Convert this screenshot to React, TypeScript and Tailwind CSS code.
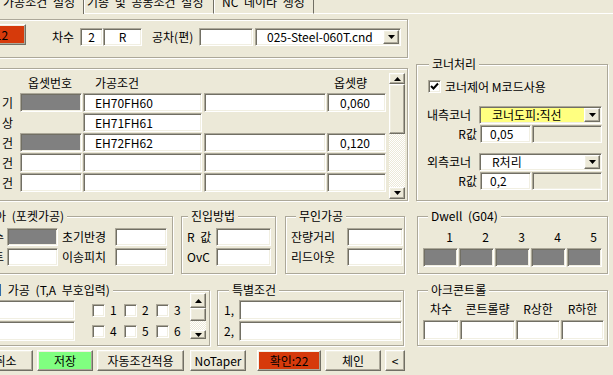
import React from "react";

const sunken =
  "border border-t-[#ACA899] border-l-[#ACA899] border-r-white border-b-white shadow-[inset_1px_1px_0_#716F64,inset_-1px_-1px_0_#F1EFE2]";
const raised =
  "border border-t-white border-l-white border-r-[#716F64] border-b-[#716F64] shadow-[inset_-1px_-1px_0_#ACA899,inset_1px_1px_0_#F1EFE2]";
const etched = "border border-[#ACA899] shadow-[inset_1px_1px_0_#fff,1px_1px_0_#fff]";

type Kids = { className?: string; children?: React.ReactNode };

function Box({ className = "", children }: Kids) {
  return (
    <div className={`${sunken} shrink-0 flex items-center whitespace-nowrap overflow-hidden ${className}`}>
      {children}
    </div>
  );
}

function Btn({ className = "", children }: Kids) {
  return (
    <div className={`${raised} h-[21px] shrink-0 flex items-center justify-center whitespace-nowrap ${className}`}>
      {children}
    </div>
  );
}

function Tri({ up }: { up?: boolean }) {
  return (
    <svg width="7" height="4" viewBox="0 0 7 4">
      {up ? <polygon points="0,4 3.5,0 7,4" fill="#000" /> : <polygon points="0,0 7,0 3.5,4" fill="#000" />}
    </svg>
  );
}

function Check({ checked }: { checked?: boolean }) {
  return (
    <div className={`${sunken} w-[13px] h-[13px] bg-white shrink-0 flex items-center justify-center`}>
      {checked && (
        <svg width="9" height="9" viewBox="0 0 9 9">
          <polyline points="1,4 3.5,6.5 8,1.5" fill="none" stroke="#000" strokeWidth="2" />
        </svg>
      )}
    </div>
  );
}

function Combo({ className = "", text, pad = "pl-[10px]" }: { className?: string; text: string; pad?: string }) {
  return (
    <div className={`${sunken} p-[1px] shrink-0 flex ${className}`}>
      <div className={`flex-1 flex items-center whitespace-nowrap overflow-hidden ${pad}`}>{text}</div>
      <div className={`${raised} w-[16px] bg-[#ECE9D8] flex items-center justify-center`}>
        <Tri />
      </div>
    </div>
  );
}

function VScroll({ className = "", up, thumb, down }: { className?: string; up: string; thumb: string; down: string }) {
  return (
    <div className={`w-[16px] shrink-0 flex flex-col ${className}`}>
      <div className={`${raised} ${up} shrink-0 bg-[#ECE9D8] flex items-center justify-center`}>
        <Tri up />
      </div>
      <div className={`${raised} ${thumb} shrink-0 bg-[#ECE9D8]`} />
      <div className="flex-1 bg-[repeating-conic-gradient(#fff_0_25%,#ECE9D8_0_50%)] bg-[length:2px_2px]" />
      <div className={`${raised} ${down} shrink-0 bg-[#ECE9D8] flex items-center justify-center`}>
        <Tri />
      </div>
    </div>
  );
}

function Group({ title, legend = "left-[10px]", className = "", children }: Kids & { title?: string; legend?: string }) {
  return (
    <div className={`relative shrink-0 ${etched} ${className}`}>
      {title && (
        <span className={`absolute -top-[7px] ${legend} px-[3px] leading-[12px] bg-[#ECE9D8] whitespace-nowrap`}>
          {title}
        </span>
      )}
      {children}
    </div>
  );
}

const offsetRows = [
  { label: "기", num: "bg-[#808080]", cond: "EH70FH60", extra: true, amt: "0,060" },
  { label: "상", num: "", cond: "EH71FH61", extra: false, amt: "" },
  { label: "건", num: "bg-[#808080]", cond: "EH72FH62", extra: true, amt: "0,120" },
  { label: "건", num: "bg-white", cond: "", extra: true, amt: "" },
  { label: "건", num: "bg-white", cond: "", extra: true, amt: "" },
];

export default function App() {
  return (
    <div className="w-[613px] h-[375px] overflow-hidden bg-[#ECE9D8] text-black text-[12px] leading-[14px] font-['Noto_Sans_CJK_KR','Noto_Sans',sans-serif] [word-spacing:3px] select-none">
      {/* tabs */}
      <div className="flex h-[14px] overflow-hidden">
        <div className="-ml-[20px] w-[104px] shrink-0 overflow-hidden border-r border-r-[#716F64] pr-[8px] text-right whitespace-nowrap">
          <div className="-mt-[5px]">가공조건 설정</div>
        </div>
        <div className="w-[130px] shrink-0 overflow-hidden border-l border-l-white border-r border-r-[#716F64] border-b border-b-white pl-[2px] whitespace-nowrap">
          <div className="-mt-[5px]">기종 및 공통조건 설정</div>
        </div>
        <div className="w-[100px] shrink-0 overflow-hidden border-l border-l-white border-r border-r-[#716F64] border-b border-b-white pl-[7px] whitespace-nowrap">
          <div className="-mt-[5px]">NC 데이타 생성</div>
        </div>
        <div className="flex-1 border-b border-b-white" />
      </div>

      {/* top bar */}
      <div className="flex mt-[5px]">
        <Group className="-ml-[60px] w-[468px] h-[39px] flex items-start pl-[36px]">
          <Btn className="mt-[4px] w-[49px] bg-[#D63A0B]">12</Btn>
          <div className="flex items-center mt-[8px] h-[18px]">
            <span className="ml-[26px] w-[28px] shrink-0">차수</span>
            <Box className="w-[23px] h-[18px] bg-white justify-center">2</Box>
            <Box className="w-[39px] h-[18px] bg-white justify-center">R</Box>
            <span className="ml-[10px] w-[47px] shrink-0 whitespace-nowrap">공차(편)</span>
            <Box className="w-[54px] h-[18px] bg-white" />
            <Combo className="ml-[2px] w-[146px] h-[18px] bg-white" text="025-Steel-060T.cnd" pad="pl-[10px]" />
          </div>
        </Group>
      </div>

      {/* offsets + corner */}
      <div className="flex items-start">
        <Group className="-ml-[60px] mt-[10px] w-[468px] h-[133px] flex items-start">
          <div className="flex flex-col">
            <div className="flex mt-[7px] h-[14px] whitespace-nowrap">
              <div className="w-[79px] shrink-0" />
              <div className="w-[63px] shrink-0 pl-[8px]">옵셋번호</div>
              <div className="w-[121px] shrink-0 pl-[12px]">가공조건</div>
              <div className="w-[123px] shrink-0" />
              <div className="w-[59px] shrink-0 pl-[7px]">옵셋량</div>
            </div>
            <div className="flex flex-col gap-[1px] mt-[3px]">
              {offsetRows.map((r, i) => (
                <div key={i} className="flex h-[19px] items-center">
                  <span className="w-[79px] shrink-0 text-right pr-[7px]">{r.label}</span>
                  {r.num ? <Box className={`w-[62px] h-[19px] ${r.num}`} /> : <div className="w-[62px] shrink-0" />}
                  <Box className="ml-[1px] w-[119px] h-[19px] bg-white pl-[11px]">{r.cond}</Box>
                  {r.extra ? (
                    <>
                      <Box className="ml-[2px] w-[122px] h-[19px] bg-white" />
                      <Box className="ml-[1px] w-[59px] h-[19px] bg-white pl-[12px]">{r.amt}</Box>
                    </>
                  ) : null}
                </div>
              ))}
            </div>
          </div>
          <VScroll className="ml-[3px] mt-[4px] h-[126px]" up="h-[11px]" thumb="h-[50px]" down="h-[12px]" />
        </Group>

        <Group title="코너처리" legend="left-[12px]" className="ml-[8px] mt-[6px] w-[192px] h-[137px] flex flex-col">
          <div className="flex items-center mt-[15px] pl-[11px] h-[13px]">
            <Check checked />
            <span className="ml-[4px] whitespace-nowrap [word-spacing:0px]">코너제어 M코드사용</span>
          </div>
          <div className="flex items-center mt-[13px] h-[18px]">
            <span className="w-[62px] shrink-0 pl-[10px]">내측코너</span>
            <Combo className="w-[123px] h-[18px] bg-[#FFFF80]" text="코너도피:직선" pad="pl-[11px]" />
          </div>
          <div className="flex items-center mt-[1px] h-[18px]">
            <span className="w-[63px] shrink-0 text-right pr-[3px]">R값</span>
            <Box className="w-[51px] h-[18px] bg-white pl-[9px]">0,05</Box>
            <Box className="ml-[1px] w-[70px] h-[18px] bg-[#ECE9D8]" />
          </div>
          <div className="flex items-center mt-[10px] h-[18px]">
            <span className="w-[62px] shrink-0 pl-[10px]">외측코너</span>
            <Combo className="w-[123px] h-[18px] bg-white" text="R처리" pad="pl-[11px]" />
          </div>
          <div className="flex items-center mt-[1px] h-[18px]">
            <span className="w-[63px] shrink-0 text-right pr-[3px]">R값</span>
            <Box className="w-[51px] h-[18px] bg-white pl-[9px]">0,2</Box>
            <Box className="ml-[1px] w-[70px] h-[18px] bg-[#ECE9D8]" />
          </div>
        </Group>
      </div>

      {/* pocket / approach / unmanned / dwell */}
      <div className="flex items-start mt-[15px]">
        <Group title="노코아 (포켓가공)" legend="left-[29px]" className="-ml-[60px] w-[233px] h-[58px]">
          <div className="flex flex-col gap-[2px] mt-[11px]">
            <div className="flex items-center h-[18px]">
              <span className="w-[66px] shrink-0 text-right pr-[3px]">수</span>
              <Box className="w-[51px] h-[18px] bg-[#808080]" />
              <span className="w-[57px] shrink-0 pl-[4px]">초기반경</span>
              <Box className="w-[52px] h-[18px] bg-white" />
            </div>
            <div className="flex items-center h-[18px]">
              <span className="w-[66px] shrink-0 text-right pr-[3px]">트</span>
              <Box className="w-[51px] h-[18px] bg-white" />
              <span className="w-[57px] shrink-0 pl-[4px]">이송피치</span>
              <Box className="w-[52px] h-[18px] bg-white" />
            </div>
          </div>
        </Group>

        <Group title="진입방법" legend="left-[6px]" className="ml-[8px] w-[95px] h-[58px]">
          <div className="flex flex-col gap-[2px] mt-[11px]">
            <div className="flex items-center h-[18px]">
              <span className="w-[34px] shrink-0 pl-[5px] whitespace-nowrap">R 값</span>
              <Box className="w-[55px] h-[18px] bg-white" />
            </div>
            <div className="flex items-center h-[18px]">
              <span className="w-[34px] shrink-0 pl-[5px]">OvC</span>
              <Box className="w-[55px] h-[18px] bg-white" />
            </div>
          </div>
        </Group>

        <Group title="무인가공" className="ml-[9px] w-[120px] h-[58px]">
          <div className="flex flex-col gap-[2px] mt-[11px]">
            <div className="flex items-center h-[18px]">
              <span className="w-[61px] shrink-0 pl-[5px]">잔량거리</span>
              <Box className="w-[56px] h-[18px] bg-white" />
            </div>
            <div className="flex items-center h-[18px]">
              <span className="w-[61px] shrink-0 pl-[5px]">리드아웃</span>
              <Box className="w-[56px] h-[18px] bg-white" />
            </div>
          </div>
        </Group>

        <Group title="Dwell (G04)" className="ml-[12px] w-[191px] h-[58px]">
          <div className="flex gap-[1px] pl-[5px] mt-[13px] h-[14px]">
            {[1, 2, 3, 4, 5].map((n) => (
              <span key={n} className="w-[35px] shrink-0 text-right pr-[5px]">{n}</span>
            ))}
          </div>
          <div className="flex gap-[1px] pl-[5px] mt-[4px]">
            {[1, 2, 3, 4, 5].map((n) => (
              <Box key={n} className="w-[35px] h-[19px] bg-[#808080]" />
            ))}
          </div>
        </Group>
      </div>

      {/* taper / special / arc */}
      <div className="flex items-start mt-[16px]">
        <Group title="테이퍼 가공 (T,A 부호입력)" legend="left-[25px]" className="-ml-[60px] w-[270px] h-[56px] flex items-start">
          <div className="flex flex-col gap-[1px] mt-[9px] ml-[39px]">
            <Box className="w-[95px] h-[20px] bg-white" />
            <Box className="w-[95px] h-[20px] bg-white" />
          </div>
          <div className="flex flex-col gap-[1px] mt-[9px] ml-[17px]">
            {[[1, 2, 3], [4, 5, 6]].map((row, i) => (
              <div key={i} className="flex h-[20px] items-center">
                {row.map((n) => (
                  <div key={n} className="w-[32px] shrink-0 flex items-center">
                    <Check />
                    <span className="ml-[5px]">{n}</span>
                  </div>
                ))}
              </div>
            ))}
          </div>
          <VScroll className="ml-[2px] mt-[2px] h-[46px]" up="h-[15px]" thumb="h-[13px]" down="h-[9px]" />
        </Group>

        <Group title="특별조건" legend="left-[11px]" className="ml-[7px] w-[187px] h-[56px]">
          <div className="flex flex-col gap-[1px] mt-[9px]">
            {["1,", "2,"].map((t) => (
              <div key={t} className="flex items-center h-[20px]">
                <span className="w-[21px] shrink-0 pl-[6px]">{t}</span>
                <Box className="w-[163px] h-[20px] bg-white" />
              </div>
            ))}
          </div>
        </Group>

        <Group title="아크콘트롤" className="ml-[13px] w-[191px] h-[56px]">
          <div className="flex gap-[1px] pl-[5px] mt-[11px] h-[14px] whitespace-nowrap">
            <span className="w-[36px] shrink-0 text-center">차수</span>
            <span className="w-[55px] shrink-0 text-center">콘트롤량</span>
            <span className="w-[44px] shrink-0 text-center">R상한</span>
            <span className="w-[43px] shrink-0 text-center">R하한</span>
          </div>
          <div className="flex gap-[1px] pl-[5px] mt-[4px]">
            <Box className="w-[36px] h-[20px] bg-white" />
            <Box className="w-[55px] h-[20px] bg-white" />
            <Box className="w-[44px] h-[20px] bg-white" />
            <Box className="w-[43px] h-[20px] bg-white" />
          </div>
        </Group>
      </div>

      {/* buttons */}
      <div className="flex mt-[4px]">
        <Btn className="-ml-[22px] w-[55px]">취소</Btn>
        <Btn className="ml-[4px] w-[56px] bg-[#80FF80]">저장</Btn>
        <Btn className="ml-[4px] w-[87px]">자동조건적용</Btn>
        <Btn className="ml-[6px] w-[56px]">NoTaper</Btn>
        <Btn className="ml-[11px] w-[64px] bg-[#D63A0B]">확인:22</Btn>
        <Btn className="ml-[4px] w-[56px]">체인</Btn>
        <Btn className="ml-[4px] w-[20px]">&lt;</Btn>
      </div>
    </div>
  );
}
